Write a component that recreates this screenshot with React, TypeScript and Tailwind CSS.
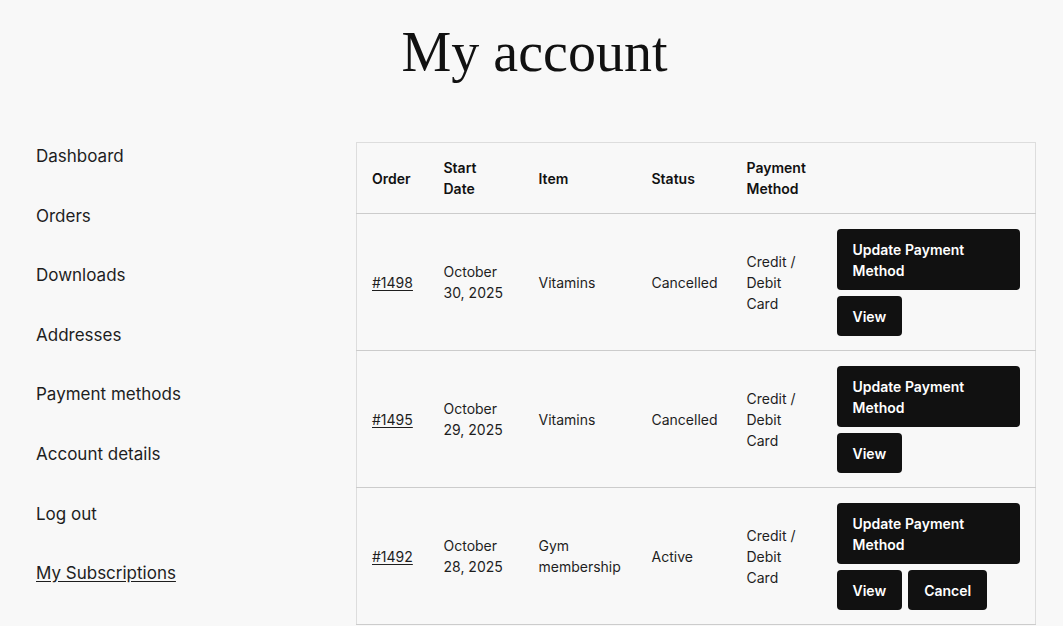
import React from 'react';

type Sub = {
  id: string;
  date: [string, string];
  item: string;
  status: string;
  canCancel?: boolean;
};

const navItems = [
  'Dashboard',
  'Orders',
  'Downloads',
  'Addresses',
  'Payment methods',
  'Account details',
  'Log out',
  'My Subscriptions',
];

const subs: Sub[] = [
  { id: '#1498', date: ['October', '30, 2025'], item: 'Vitamins', status: 'Cancelled' },
  { id: '#1495', date: ['October', '29, 2025'], item: 'Vitamins', status: 'Cancelled' },
  { id: '#1492', date: ['October', '28, 2025'], item: 'Gym membership', status: 'Active', canCancel: true },
];

const btn =
  'inline-block rounded-[4px] bg-[#111111] px-4 py-[9.5px] text-left text-[14px] font-semibold leading-[21px] text-white';

export default function App() {
  return (
    <div
      className="min-h-screen bg-[#f8f8f8] text-[#1e1e1e]"
      style={{ fontFamily: 'Inter, "Noto Sans", sans-serif' }}
    >
      <h1
        className="pt-[19px] pl-[6px] text-center text-[56px] leading-[67px] text-[#111111]"
        style={{ fontFamily: '"Liberation Serif", "DejaVu Serif", serif' }}
      >
        My account
      </h1>

      <div className="mt-[56px] flex items-start pl-[36px] pr-[27px]">
        {/* Account navigation */}
        <nav className="w-[320px] shrink-0 pt-[2px]">
          <ul className="flex flex-col gap-[34.6px]">
            {navItems.map((n, i) => (
              <li key={n} className="text-[17px] leading-[25px]">
                <a
                  href="#"
                  className={i === navItems.length - 1 ? 'underline underline-offset-2' : ''}
                >
                  {n}
                </a>
              </li>
            ))}
          </ul>
        </nav>

        {/* Subscriptions table */}
        <table className="w-full table-fixed border-collapse border border-[#dddddd] text-[14px] leading-[21px]">
          <colgroup>
            <col className="w-[72px]" />
            <col className="w-[95px]" />
            <col className="w-[113px]" />
            <col className="w-[95px]" />
            <col className="w-[90px]" />
            <col />
          </colgroup>
          <thead>
            <tr className="border-b border-[#cccccc] text-left text-[#111111]">
              <th className="px-[15px] py-[14px] font-semibold">Order</th>
              <th className="px-[15px] py-[14px] font-semibold">Start Date</th>
              <th className="px-[15px] py-[14px] font-semibold">Item</th>
              <th className="px-[15px] py-[14px] font-semibold">Status</th>
              <th className="px-[15px] py-[14px] font-semibold">Payment Method</th>
              <th className="px-[15px] py-[14px]" />
            </tr>
          </thead>
          <tbody>
            {subs.map((s) => (
              <tr key={s.id} className="border-b border-[#cccccc] align-middle">
                <td className="px-[15px]">
                  <a href="#" className="underline underline-offset-2">
                    {s.id}
                  </a>
                </td>
                <td className="px-[15px]">
                  {s.date[0]}
                  <br />
                  {s.date[1]}
                </td>
                <td className="px-[15px]">{s.item}</td>
                <td className="px-[15px]">{s.status}</td>
                <td className="px-[15px]">Credit / Debit Card</td>
                <td className="px-[15px] pt-[15px] pb-[14px]">
                  <div className="flex flex-col items-start gap-[6px]">
                    <button className={btn}>Update Payment Method</button>
                    <div className="flex gap-[6px]">
                      <button className={btn}>View</button>
                      {s.canCancel && <button className={btn}>Cancel</button>}
                    </div>
                  </div>
                </td>
              </tr>
            ))}
          </tbody>
        </table>
      </div>
    </div>
  );
}
